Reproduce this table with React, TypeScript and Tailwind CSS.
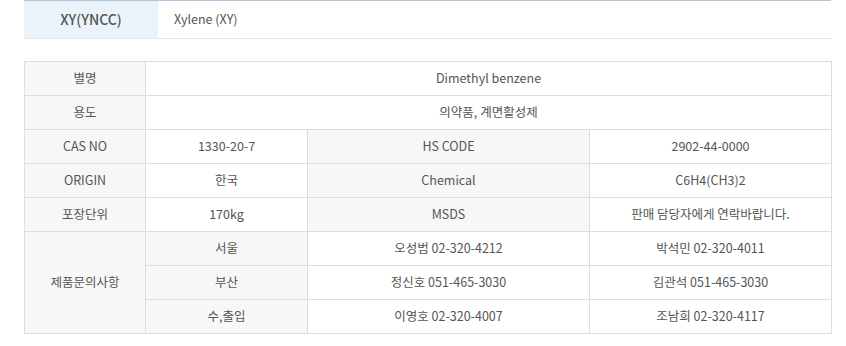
const font = { fontFamily: '"Noto Sans CJK KR", "Noto Sans", sans-serif' };

const th = "border border-[#dddddd] bg-[#f7f7f7] text-center font-normal";
const td = "border border-[#dddddd] bg-white text-center font-normal";

const contacts = [
  { area: "서울", a: "오성범 02-320-4212", b: "박석민 02-320-4011" },
  { area: "부산", a: "정신호 051-465-3030", b: "김관석 051-465-3030" },
  { area: "수,출입", a: "이영호 02-320-4007", b: "조남희 02-320-4117" },
];

export default function App() {
  return (
    <div className="w-[846px] h-[346px] bg-white px-[24px] pr-[15px] text-[#555555]" style={font}>
      <div className="flex h-[39px] border-t border-t-[#b3c5dd] border-b border-b-[#e1e4ea]">
        <div className="w-[134px] flex items-center justify-center bg-[#ebf3fa] text-[14px] font-medium text-[#555555]">
          XY(YNCC)
        </div>
        <div className="flex items-center pl-[16px] text-[12.5px] text-[#555555]">Xylene (XY)</div>
      </div>

      <table className="mt-[22px] w-[807px] table-fixed border-collapse text-[12.5px] leading-none">
        <colgroup>
          <col className="w-[121px]" />
          <col className="w-[162px]" />
          <col className="w-[282px]" />
          <col className="w-[242px]" />
        </colgroup>
        <tbody>
          <tr className="h-[34px]">
            <th className={th}>별명</th>
            <td className={td} colSpan={3}>Dimethyl benzene</td>
          </tr>
          <tr className="h-[34px]">
            <th className={th}>용도</th>
            <td className={td} colSpan={3}>의약품, 계면활성제</td>
          </tr>
          <tr className="h-[34px]">
            <th className={th}>CAS NO</th>
            <td className={td}>1330-20-7</td>
            <th className={th}>HS CODE</th>
            <td className={td}>2902-44-0000</td>
          </tr>
          <tr className="h-[34px]">
            <th className={th}>ORIGIN</th>
            <td className={td}>한국</td>
            <th className={th}>Chemical</th>
            <td className={td}>C6H4(CH3)2</td>
          </tr>
          <tr className="h-[34px]">
            <th className={th}>포장단위</th>
            <td className={td}>170kg</td>
            <th className={th}>MSDS</th>
            <td className={td}>판매 담당자에게 연락바랍니다.</td>
          </tr>
          {contacts.map((c, i) => (
            <tr key={c.area} className="h-[34px]">
              {i === 0 ? (
                <th className={th} rowSpan={3}>
                  제품문의사항
                </th>
              ) : null}
              <th className={th}>{c.area}</th>
              <td className={td}>{c.a}</td>
              <td className={td}>{c.b}</td>
            </tr>
          ))}
        </tbody>
      </table>
    </div>
  );
}
